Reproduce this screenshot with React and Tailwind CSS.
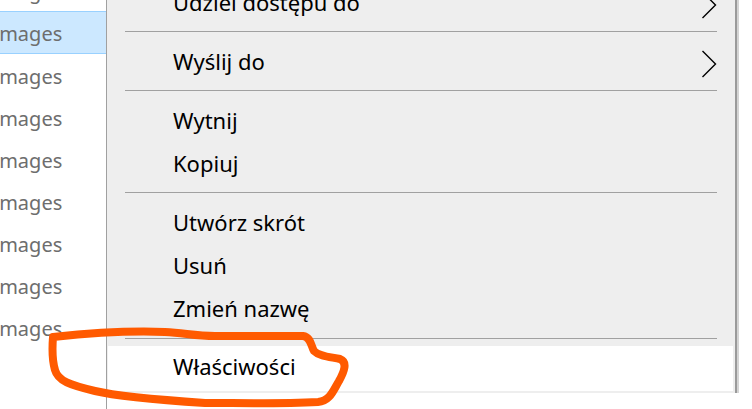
import React from "react";

const fileRows = [false, true, false, false, false, false, false, false, false];

const Separator = ({ last }) => (
  <div className={last ? "pt-[6px] pb-[7px]" : "pt-[5px] pb-[10px]"}>
    <div className="h-px ml-[17px] mr-[16px] bg-[#a0a0a0]" />
  </div>
);

const Chevron = () => (
  <svg width="16" height="28" viewBox="0 0 16 28" className="absolute right-[16px] top-1/2 -translate-y-1/2">
    <path d="M1.5 1 L14.5 14 L1.5 27" fill="none" stroke="#000" strokeWidth="1.4" />
  </svg>
);

const Item = ({ label, sub, hover, tall }) => (
  <div
    className={`relative flex items-center pl-[65px] ${tall ? "h-[45px]" : "h-[43px]"} ${
      hover ? "bg-white" : ""
    }`}
  >
    <span className="text-[22px] text-black leading-none -mt-[6px]">{label}</span>
    {sub && <Chevron />}
  </div>
);

const App = () => {
  return (
    <div
      className="relative flex w-[752px] h-[409px] overflow-hidden bg-white"
      style={{ fontFamily: '"Noto Sans", "Open Sans", sans-serif' }}
    >
      {/* File list behind the menu */}
      <div className="w-[107px] h-full shrink-0 border-r border-[#a0a0a0] overflow-hidden">
        <div className="-mt-[31px]">
          {fileRows.map((sel, i) => (
            <div
              key={i}
              className={`flex items-center h-[42px] ${
                sel ? "bg-[#cce8ff] border-y border-[#99d1ff] h-[43px]" : ""
              }`}
            >
              <span className="-ml-[6px] mt-[3px] text-[20px] text-[#6d6d6d] leading-none whitespace-nowrap">
                images
              </span>
            </div>
          ))}
        </div>
      </div>

      {/* Context menu */}
      <div className="flex w-[632px] h-[393px] shrink-0">
        <div className="w-[628px] h-full bg-[#eeeeee] pl-px pr-[2px] overflow-hidden">
          <div className="-mt-[17px]">
            <Item label="Udziel dostępu do" sub />
            <Separator />
            <Item label="Wyślij do" sub />
            <Separator />
            <Item label="Wytnij" />
            <Item label="Kopiuj" />
            <Separator />
            <Item label="Utwórz skrót" />
            <Item label="Usuń" />
            <Item label="Zmień nazwę" />
            <Separator last />
            <Item label="Właściwości" hover tall />
          </div>
        </div>
        <div className="w-[2px] h-full bg-[#9a9a9a]" />
        <div className="w-[2px] h-full bg-[#d4d4d4]" />
      </div>

      {/* Hand-drawn highlight */}
      <svg
        className="absolute left-0 top-0 pointer-events-none"
        width="752"
        height="409"
        viewBox="0 0 752 409"
      >
        <path
          d="M53 337 C100 332 140 331 165 332 C185 333 195 336 215 336 C250 336 280 336 303 336 C311 337 311 346 314 351 C320 357 332 357 340 359 C348 362 344 372 339 381 C333 391 330 401 318 402 C280 404 240 403 205 403 C160 400 120 397 95 391 C70 385 58 381 55 370 C52 360 52 350 53 337 Z"
          fill="none"
          stroke="#ff5a00"
          strokeWidth="8"
          strokeLinejoin="round"
          strokeLinecap="round"
        />
      </svg>
    </div>
  );
};

export default App;
